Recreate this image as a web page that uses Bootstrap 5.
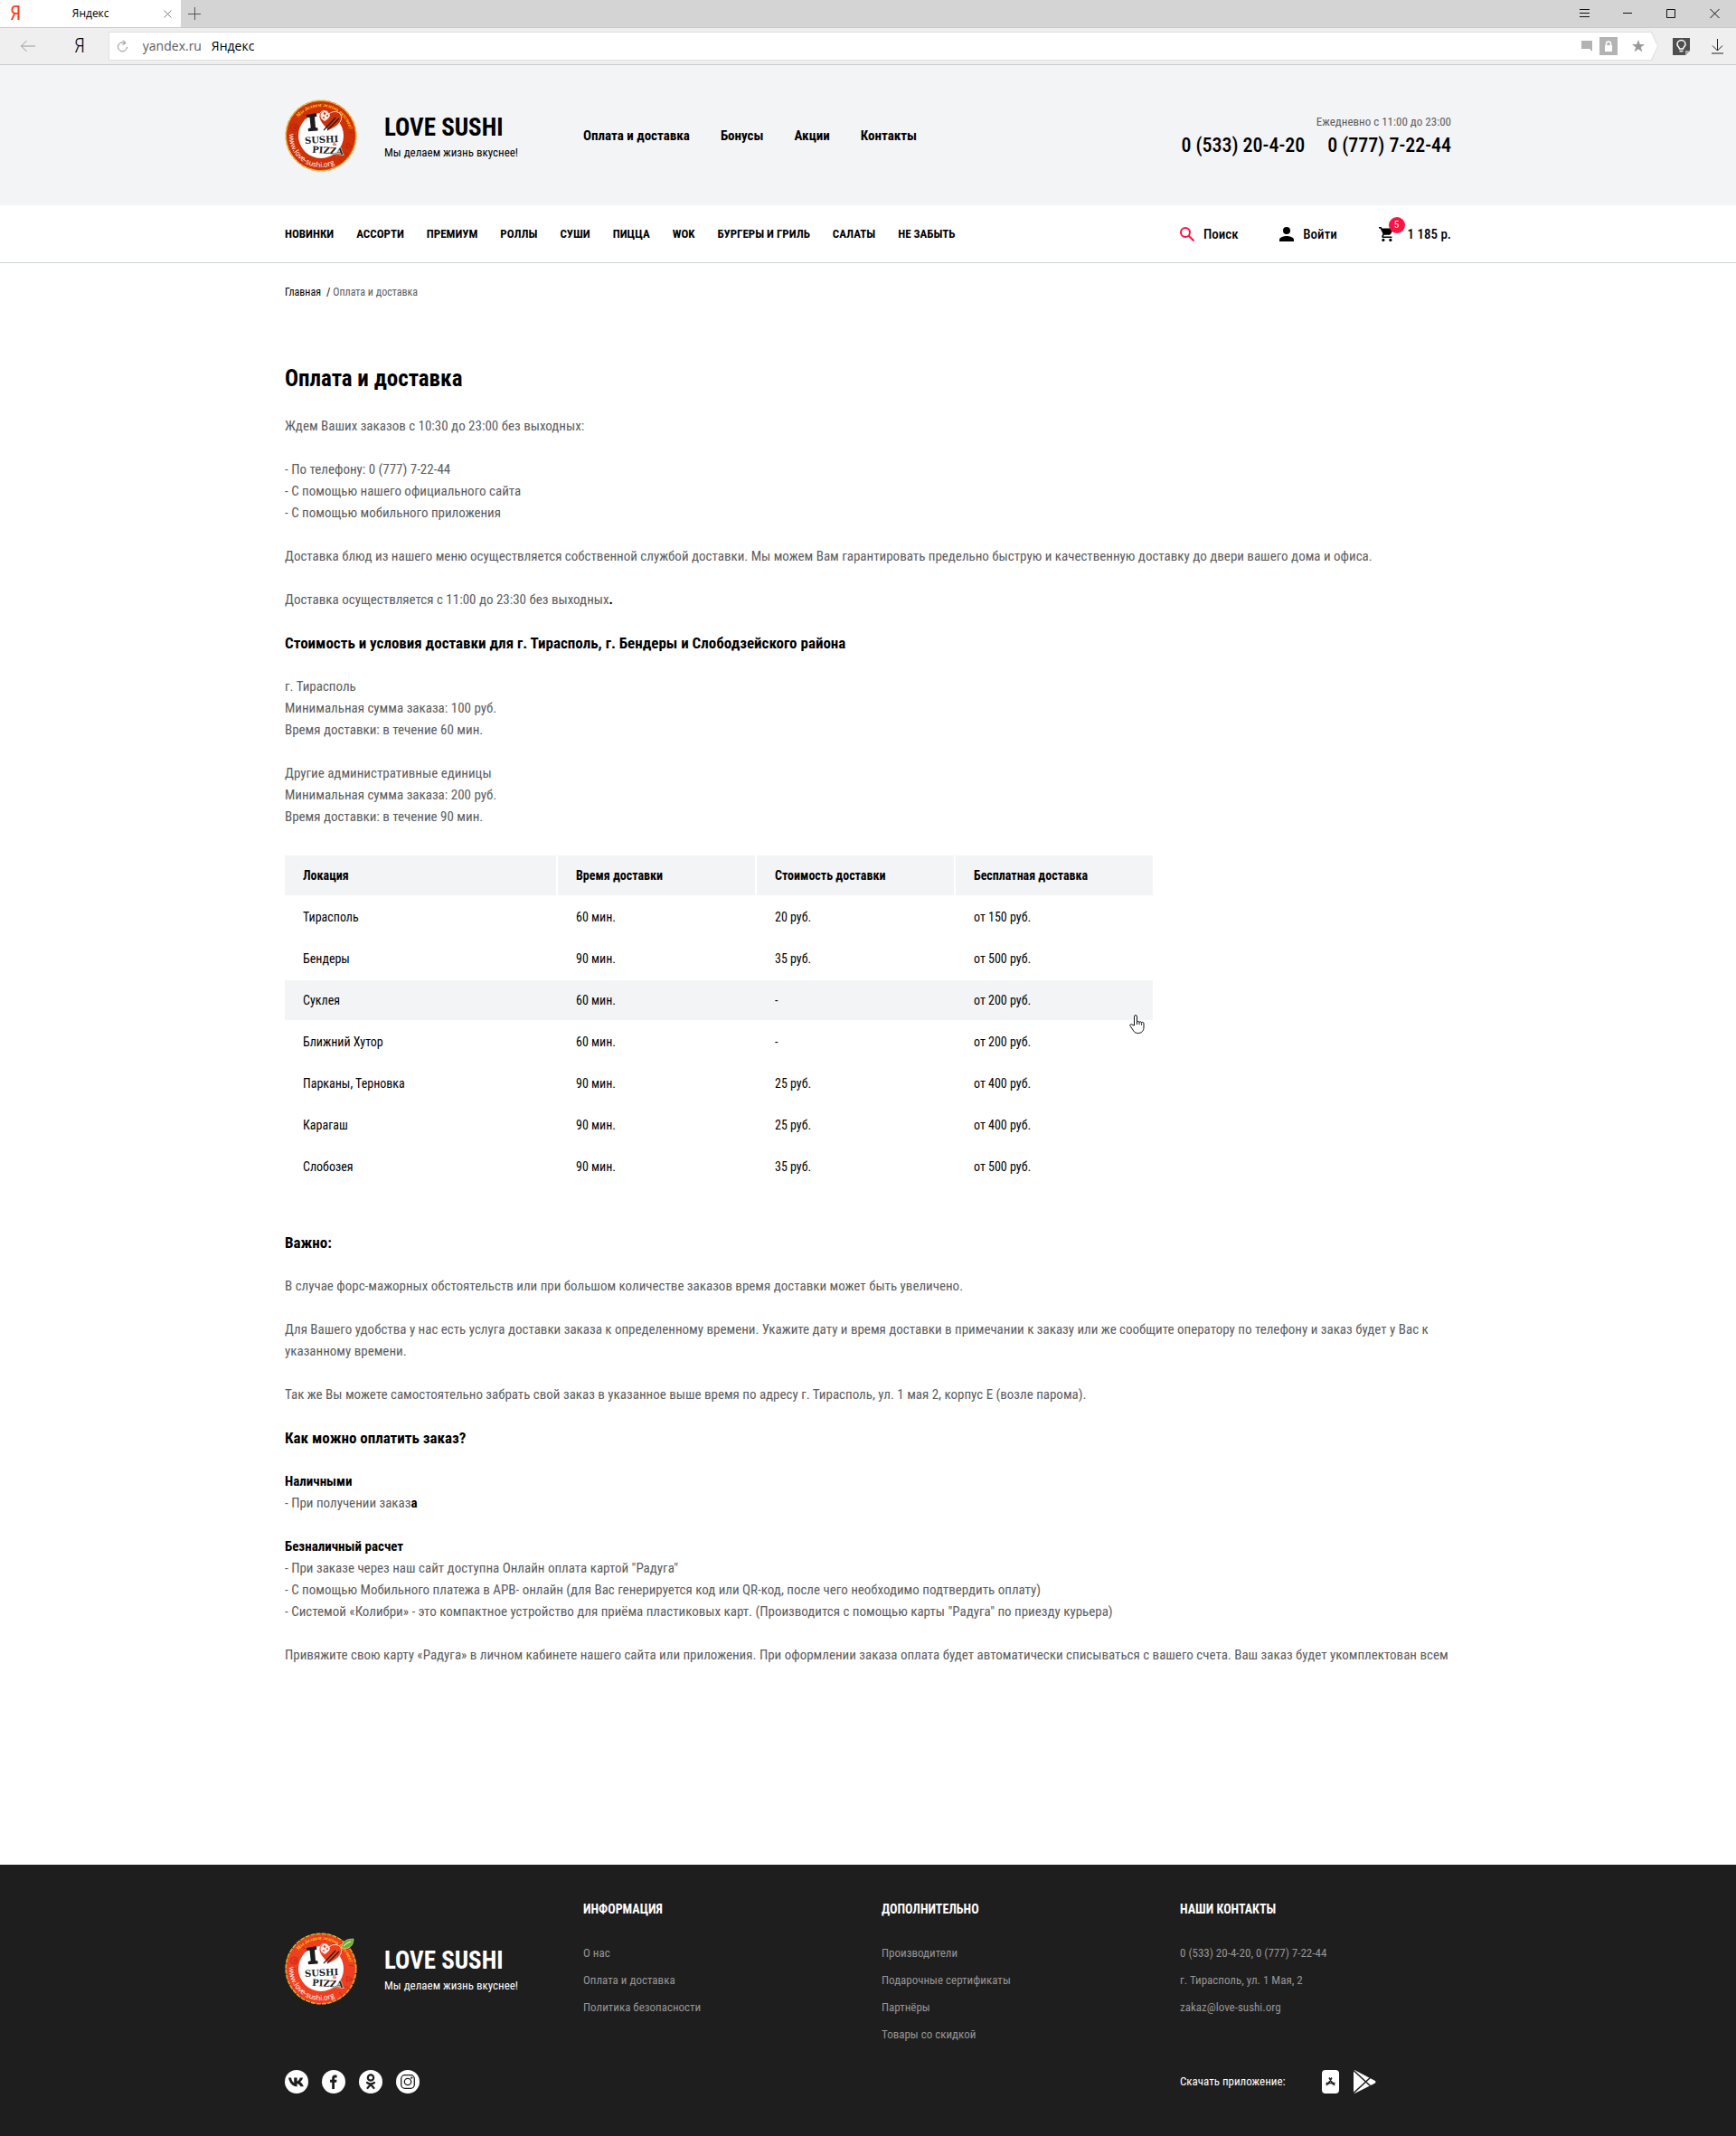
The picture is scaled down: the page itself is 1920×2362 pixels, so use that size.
<!DOCTYPE html>
<html lang="ru">
<head>
<meta charset="utf-8">
<meta name="viewport" content="width=device-width, initial-scale=1">
<title>Оплата и доставка — LOVE SUSHI</title>
<link href="https://cdn.jsdelivr.net/npm/bootstrap@5.3.0/dist/css/bootstrap.min.css" rel="stylesheet">
<style>
  :root { --ink: #000; --muted: #5b5c5d; --panel: #f3f4f6; --brand: #fb1342; }
  body { font-family: "Roboto Condensed", Roboto, sans-serif; font-size: 15px; line-height: 24px; color: var(--ink); background: #fff; }
  a { color: inherit; text-decoration: none; }
  svg { display: block; flex: none; }
  .site-wrap { --bs-gutter-x: 30px; }
  .site-wrap > .row { --bs-gutter-x: 30px; }

  /* browser frame */
  .chrome-ui { font-family: "Open Sans", sans-serif; font-size: 14px; }
  .chrome-ui button { border: 0; background: none; padding: 0; color: inherit; }
  .tab-strip { background: #d4d4d4; height: 31px; border-bottom: 1px solid #c9c9c9; }
  .tab-item { width: 200px; background: #fff; font-size: 12px; padding: 0 10px 0 11px; }
  .ya-mark { font-family: "Roboto Condensed", sans-serif; font-size: 22px; line-height: 30px; font-weight: 300; }
  .ya-red { color: #fc3f1d; font-weight: 400; }
  .ya-home { margin: 0 26px 0 42px; }
  .win-buttons { gap: 37px; padding-right: 18px; }
  .tool-strip { background: #efefef; height: 41px; border-bottom: 1px solid #c8cacc; padding: 0 14px 0 22px; }
  .address-edge { background: #e0e0e0; padding: 1px; height: 32px; clip-path: polygon(0 0, calc(100% - 7px) 0, 100% 50%, calc(100% - 7px) 100%, 0 100%); }
  .address-box { background: #fff; clip-path: polygon(0 0, calc(100% - 7px) 0, 100% 50%, calc(100% - 7px) 100%, 0 100%); padding: 0 14px 0 8px; }
  .address-box input { border: 0; outline: 0; padding: 0; width: 76px; color: #5c5c5c; background: none; }

  /* header */
  .site-head { background: var(--panel); height: 155px; }
  .brand-name { font-size: 27px; font-weight: 700; line-height: 36px; }
  .brand-tag { font-size: 13px; line-height: 20px; }
  .brand-link { gap: 30px; }
  .brand-words { padding-top: 2px; }
  .top-nav { gap: 34px; font-weight: 700; }
  .hours { font-size: 13px; line-height: 22px; color: var(--muted); }
  .phones { font-size: 22px; line-height: 30px; font-weight: 500; gap: 25px; }
  .cat-bar { height: 64px; border-bottom: 1px solid #cdd3d8; }
  .cat-nav { gap: 25px; font-size: 13px; font-weight: 700; text-transform: uppercase; }
  .user-nav a { gap: 10px; font-weight: 500; }
  .user-nav .cart-link { gap: 16px; }
  .cart-count { position: absolute; left: 11px; top: -11px; width: 18px; height: 18px; border-radius: 50%; background: var(--brand); color: #fff; font-size: 11px; line-height: 18px; font-weight: 400; text-align: center; }

  /* article */
  .crumbs { font-size: 12px; line-height: 20px; padding-top: 22px; gap: 6px; color: var(--muted); }
  .crumbs a { color: var(--ink); }
  .page-title { font-size: 25px; line-height: 32px; font-weight: 700; margin: 70px 0 24px; }
  .page-text { padding-bottom: 196px; color: var(--muted); }
  .page-text p, .page-text ul { margin: 0 0 24px; }
  .page-text b, .page-text h2, .page-text h3 { color: var(--ink); }
  .page-text h2 { font-size: 17px; line-height: 24px; font-weight: 700; margin: 0 0 24px; }
  .page-text h3 { font-size: 15px; line-height: 24px; font-weight: 700; margin: 0; }
  .rates { width: 960px; max-width: 100%; border-collapse: separate; border-spacing: 0 2px; table-layout: fixed; margin: 29px 0 48px; color: var(--ink); font-size: 14px; }
  .rates th, .rates td { height: 44px; padding: 0 20px; }
  .rates th { background: var(--panel); font-weight: 700; border-right: 2px solid #fff; }
  .rates th:last-child { border-right: 0; }
  .rates .is-hover td { background: var(--panel); }
  .col-place { width: 302px; }
  .col-mid { width: 220px; }
  .pointer { position: absolute; right: 9px; bottom: -15px; }

  /* footer */
  .site-foot { background: #1e1e1e; color: #fff; padding: 37px 0 47px; }
  .foot-brand { margin-top: 38px; }
  .foot-title { font-size: 14px; line-height: 24px; font-weight: 700; margin: 0 0 22px; text-transform: uppercase; }
  .foot-list { font-size: 13px; line-height: 30px; color: #969696; margin: 0; }
  .foot-bottom { margin-top: 24px; font-size: 13px; line-height: 26px; }
  .socials { gap: 15px; }
  .app-label { margin-right: 40px; }
</style>
</head>
<body>

<div class="chrome-ui">
  <div class="tab-strip d-flex justify-content-between">
    <div class="d-flex align-items-center">
      <div class="tab-item d-flex align-items-center justify-content-between h-100">
        <span class="ya-mark ya-red">Я</span><span class="me-1">Яндекс</span>
        <button type="button" aria-label="Закрыть вкладку"><svg width="9" height="9" stroke="#777"><path d="M.5.5l8 8M8.500.5l-8 8"/></svg></button>
      </div>
      <button type="button" class="ms-2" aria-label="Новая вкладка"><svg width="14" height="14" stroke="#555"><path d="M7.500 0v14M0 7.500h14"/></svg></button>
    </div>
    <div class="win-buttons d-flex align-items-center">
      <button type="button" aria-label="Меню"><svg width="11" height="10" stroke="#111"><path d="M0 .5h11M0 4.500h11M0 8.500h11"/></svg></button>
      <button type="button" aria-label="Свернуть"><svg width="11" height="10" stroke="#111"><path d="M0 4.500h10"/></svg></button>
      <button type="button" aria-label="Развернуть"><svg width="11" height="10" fill="none" stroke="#111"><path d="M.5.5h9v9h-9z"/></svg></button>
      <button type="button" aria-label="Закрыть"><svg width="11" height="10" stroke="#111"><path d="M.5 0l10 10M10.500 0l-10 10"/></svg></button>
    </div>
  </div>
  <div class="tool-strip d-flex align-items-center">
    <button type="button" aria-label="Назад"><svg width="18" height="14" fill="none" stroke="#999"><path d="M17 7H1.500M7.500 1l-6 6 6 6"/></svg></button>
    <span class="ya-mark ya-home">Я</span>
    <div class="address-edge flex-grow-1">
      <div class="address-box d-flex align-items-center h-100">
        <button type="button" class="me-3" aria-label="Обновить"><svg width="13" height="14" fill="none" stroke="#888"><path d="M11.500 8A5 5 0 1 1 9 3.500M7 .5l3 3-3.500 2"/></svg></button>
        <input type="text" value="yandex.ru" aria-label="Адрес"><span class="text-black flex-grow-1">Яндекс</span>
        <svg width="12" height="14" fill="#b3b3b3" class="me-2"><path d="M0 1h12v12l-3-3H0z"/></svg>
        <svg width="20" height="20" class="me-3"><path fill="#b3b3b3" d="M0 0h20v20H0z"/><path fill="#fff" d="M6 9h8v7H6z"/><path fill="none" stroke="#fff" stroke-width="1.500" d="M7.500 9V7.500a2.500 2.500 0 0 1 5 0V9"/></svg>
        <svg width="14" height="14" fill="#999"><path d="M7 0l1.800 5H14L9.800 8.200 11.400 13.500 7 10.300l-4.400 3.200L4.200 8.200 0 5h5.200z"/></svg>
      </div>
    </div>
    <button type="button" class="ms-3" aria-label="Подсказки"><svg width="19" height="19" fill="none"><path fill="#4f4f4f" d="M0 0h19v14l-5 5H0z"/><path fill="#aaa" d="M19 14l-5 5v-5z"/><path stroke="#fff" stroke-width="1.500" d="M7.500 12c0-2-2.500-2.500-2.500-5a4.300 4.300 0 0 1 9 0c0 2.500-2.500 3-2.500 5zM7.500 14.500h4"/></svg></button>
    <button type="button" class="ms-4" aria-label="Загрузки"><svg width="13" height="17" fill="none" stroke="#222"><path d="M6.500 0v13M1 7.500L6.500 13 12 7.500M0 16h13"/></svg></button>
  </div>
</div>

<header>
  <div class="site-head d-flex align-items-center">
    <div class="container-xxl site-wrap">
      <div class="row align-items-center">
        <div class="col-3">
          <a href="#" class="brand-link d-flex align-items-center">
            <svg width="80" height="80" viewBox="0 0 80 80" color="#cf3208" role="img" aria-label="Love Sushi">
              <g id="logo">
                <circle cx="40" cy="40" r="38.500" fill="currentColor"/>
                <circle cx="40" cy="40" r="38.800" fill="none" stroke="#e8a82c" stroke-width="1.600" stroke-dasharray="5.200 .9"/>
                <g fill="none" stroke="#a81414" opacity=".55">
                  <circle cx="10.500" cy="31" r="4"/><circle cx="11" cy="31" r="1.500"/><path d="M6 40h6M18 13l4 5M24 8l4 4M35 4l2 6M46 4l-2 6M56 8l-3 5M69 48l6 4-7 2zM66 59l5 3M60 66l4 4M13 58l-4 3M20 66l-4 4M71 36l5 1"/>
                </g>
                <circle cx="40" cy="40" r="25" fill="#fff"/>
                <path id="arcTop" d="M15 20A32 32 0 0 1 72 42" fill="none"/>
                <path id="arcLow" d="M5 38A35 35 0 0 0 68 61" fill="none"/>
                <text font-family="Liberation Serif, serif" font-style="italic" font-weight="700" font-size="6" fill="#ffc20e"><textPath href="#arcTop">Мы делаем жизнь вкуснее!</textPath></text>
                <text font-family="Open Sans, sans-serif" font-size="8" fill="#fff"><textPath href="#arcLow">www.love-sushi.org</textPath></text>
                <path d="M24 17l11-2 .5 3.500-2.500 1 1 11.500 2.500.5v3l-10.500.8-.3-3 3-1-1.200-11.500-3 .2z" fill="#1d1d1f"/>
                <path d="M48 34C40 26 36 20 39 15c3-4 8-3 10 1 4-4 11-3 13 1 3 7-5 14-14 17z" fill="currentColor" stroke="#fff" stroke-width=".8"/>
                <path d="M40 21c-2-6 2-9 6-8l4 4c0 3-3 5-6 7z" fill="#fff" opacity=".9"/>
                <g fill="currentColor"><circle cx="44" cy="15.500" r="1.300"/><circle cx="47" cy="18" r="1"/><circle cx="43" cy="20" r="1"/></g>
                <path d="M43 34l13-14M47 34l13-13" stroke="#1d1d1f" stroke-width="1.200"/>
                <g font-family="DejaVu Serif, serif" font-weight="700" fill="#1d1d1f">
                  <text x="22" y="48" font-size="10" transform="rotate(-3 40 45)">SUSHI</text>
                  <text x="30" y="60" font-size="10" stroke="#fff" stroke-width="1" paint-order="stroke" transform="rotate(4 48 59)">PIZZA</text>
                </g>
                <text x="53" y="51" font-family="DejaVu Serif, serif" font-weight="700" font-size="5" fill="currentColor">&amp;</text>
              </g>
            </svg>
            <span class="brand-words text-nowrap"><span class="brand-name d-block">LOVE SUSHI</span><span class="brand-tag d-block">Мы делаем жизнь вкуснее!</span></span>
          </a>
        </div>
        <nav class="col-5 top-nav d-flex text-nowrap">
          <a href="#">Оплата и доставка</a><a href="#">Бонусы</a><a href="#">Акции</a><a href="#">Контакты</a>
        </nav>
        <div class="col-4">
          <div class="hours text-end">Ежедневно с 11:00 до 23:00</div>
          <div class="phones d-flex justify-content-end text-nowrap"><a href="tel:053320420">0 (533) 20-4-20</a><a href="tel:077772244">0 (777) 7-22-44</a></div>
        </div>
      </div>
    </div>
  </div>
  <div class="cat-bar d-flex align-items-center">
    <div class="container-xxl site-wrap">
      <div class="row align-items-center">
        <nav class="col-9 cat-nav d-flex text-nowrap">
          <a href="#">Новинки</a><a href="#">Ассорти</a><a href="#">Премиум</a><a href="#">Роллы</a><a href="#">Суши</a><a href="#">Пицца</a><a href="#">Wok</a><a href="#">Бургеры и гриль</a><a href="#">Салаты</a><a href="#">Не забыть</a>
        </nav>
        <div class="col-3 user-nav d-flex justify-content-between text-nowrap">
          <a href="#" class="d-flex align-items-center"><svg width="16" height="16" fill="none" stroke="#fb1342" stroke-width="2"><circle cx="6" cy="6" r="5"/><path d="M9.500 9.500l6 6"/></svg>Поиск</a>
          <a href="#" class="d-flex align-items-center"><svg width="16" height="16"><circle cx="8" cy="4" r="4"/><path d="M0 16v-2c0-2.700 5.300-4 8-4s8 1.300 8 4v2z"/></svg>Войти</a>
          <a href="#" class="cart-link d-flex align-items-center"><span class="position-relative"><svg width="16" height="16"><path d="M0 0h2.600l.8 1.600h11.800c.6 0 1 .6.7 1.200l-2.900 5.200c-.3.500-.8.800-1.400.8H5.700L5 10.200c-.1.200 0 .2.200.2h9.300V12H4.900c-1.200 0-2-1.300-1.400-2.400l1-2L1.600 1.600H0z"/><circle cx="4.900" cy="14.400" r="1.600"/><circle cx="12.900" cy="14.400" r="1.600"/></svg><span class="cart-count">5</span></span>1 185 р.</a>
        </div>
      </div>
    </div>
  </div>
</header>

<main class="container-xxl site-wrap">
  <nav class="crumbs d-flex" aria-label="Навигация"><a href="#">Главная</a><span><span class="text-black">/</span> Оплата и доставка</span></nav>
  <h1 class="page-title">Оплата и доставка</h1>
  <div class="page-text">
    <p>Ждем Ваших заказов с 10:30 до 23:00 без выходных:</p>
    <ul class="list-unstyled">
      <li>- По телефону: 0 (777) 7-22-44</li>
      <li>- С помощью нашего официального сайта</li>
      <li>- С помощью мобильного приложения</li>
    </ul>
    <p>Доставка блюд из нашего меню осуществляется собственной службой доставки. Мы можем Вам гарантировать предельно быструю и качественную доставку до двери вашего дома и офиса.</p>
    <p>Доставка осуществляется с 11:00 до 23:30 без выходных<b>.</b></p>
    <h2>Стоимость и условия доставки для г. Тирасполь, г. Бендеры и Слободзейского района</h2>
    <p>г. Тирасполь<br>Минимальная сумма заказа: 100 руб.<br>Время доставки: в течение 60 мин.</p>
    <p>Другие административные единицы<br>Минимальная сумма заказа: 200 руб.<br>Время доставки: в течение 90 мин.</p>

    <table class="rates">
      <colgroup><col class="col-place"><col class="col-mid"><col class="col-mid"><col></colgroup>
      <thead><tr><th scope="col">Локация</th><th scope="col">Время доставки</th><th scope="col">Стоимость доставки</th><th scope="col">Бесплатная доставка</th></tr></thead>
      <tbody>
        <tr><td>Тирасполь</td><td>60 мин.</td><td>20 руб.</td><td>от 150 руб.</td></tr>
        <tr><td>Бендеры</td><td>90 мин.</td><td>35 руб.</td><td>от 500 руб.</td></tr>
        <tr class="is-hover"><td>Суклея</td><td>60 мин.</td><td>-</td><td class="position-relative">от 200 руб.
          <svg class="pointer" width="17" height="21" viewBox="0 0 17 21" fill="#fff" stroke="#111" stroke-linejoin="round"><path d="M5.500 12V2.200a1.500 1.500 0 0 1 3 0V8.500c0-1.500 2.500-1.500 2.500.2 0-1.500 2.500-1.200 2.500.4 0-1.300 2.500-1.100 2.500.8V14c0 4-2.500 6.500-6.500 6.500-3 0-4.500-1.500-6-4.500L1 12.500c-.8-1.500 1-2.500 2-1.500z"/><path d="M8.500 8v3M11 9v2M13.500 9.500v2"/></svg></td></tr>
        <tr><td>Ближний Хутор</td><td>60 мин.</td><td>-</td><td>от 200 руб.</td></tr>
        <tr><td>Парканы, Терновка</td><td>90 мин.</td><td>25 руб.</td><td>от 400 руб.</td></tr>
        <tr><td>Карагаш</td><td>90 мин.</td><td>25 руб.</td><td>от 400 руб.</td></tr>
        <tr><td>Слобозея</td><td>90 мин.</td><td>35 руб.</td><td>от 500 руб.</td></tr>
      </tbody>
    </table>

    <h2>Важно:</h2>
    <p>В случае форс-мажорных обстоятельств или при большом количестве заказов время доставки может быть увеличено.</p>
    <p>Для Вашего удобства у нас есть услуга доставки заказа к определенному времени. Укажите дату и время доставки в примечании к заказу или же сообщите оператору по телефону и заказ будет у Вас к указанному времени.</p>
    <p>Так же Вы можете самостоятельно забрать свой заказ в указанное выше время по адресу г. Тирасполь, ул. 1 мая 2, корпус Е (возле парома).</p>
    <h2>Как можно оплатить заказ?</h2>
    <h3>Наличными</h3>
    <p>- При получении заказ<b>а</b></p>
    <h3>Безналичный расчет</h3>
    <ul class="list-unstyled">
      <li>- При заказе через наш сайт доступна Онлайн оплата картой "Радуга"</li>
      <li>- С помощью Мобильного платежа в АРВ- онлайн (для Вас генерируется код или QR-код, после чего необходимо подтвердить оплату)</li>
      <li>- Системой «Колибри» - это компактное устройство для приёма пластиковых карт. (Производится с помощью карты "Радуга" по приезду курьера)</li>
    </ul>
    <p>Привяжите свою карту «Радуга» в личном кабинете нашего сайта или приложения. При оформлении заказа оплата будет автоматически списываться с вашего счета. Ваш заказ будет укомплектован всем</p>
  </div>
</main>

<footer class="site-foot">
  <div class="container-xxl site-wrap">
    <div class="row">
      <div class="col-3">
        <a href="#" class="brand-link foot-brand d-flex align-items-center">
          <svg width="80" height="80" viewBox="0 0 80 80" color="#ee3f20" role="img" aria-label="Love Sushi"><use href="#logo"/><path d="M63 17c0-7 5-10 13-10 0 7-4 12-13 10z" fill="#6fae2e" stroke="#d6ecb0" stroke-width=".6"/><path d="M65 15c3-3 5-4 8-5" stroke="#fff" fill="none"/></svg>
          <span class="brand-words text-nowrap"><span class="brand-name d-block">LOVE SUSHI</span><span class="brand-tag d-block">Мы делаем жизнь вкуснее!</span></span>
        </a>
      </div>
      <div class="col-3">
        <h2 class="foot-title">Информация</h2>
        <ul class="foot-list list-unstyled"><li><a href="#">О нас</a></li><li><a href="#">Оплата и доставка</a></li><li><a href="#">Политика безопасности</a></li></ul>
      </div>
      <div class="col-3">
        <h2 class="foot-title">Дополнительно</h2>
        <ul class="foot-list list-unstyled"><li><a href="#">Производители</a></li><li><a href="#">Подарочные сертификаты</a></li><li><a href="#">Партнёры</a></li><li><a href="#">Товары со скидкой</a></li></ul>
      </div>
      <div class="col-3">
        <h2 class="foot-title">Наши контакты</h2>
        <ul class="foot-list list-unstyled"><li>0 (533) 20-4-20, 0 (777) 7-22-44</li><li>г. Тирасполь, ул. 1 Мая, 2</li><li><a href="#">zakaz@love-sushi.org</a></li></ul>
      </div>
    </div>
    <div class="row foot-bottom">
      <div class="col-9 socials d-flex">
        <a href="#" aria-label="ВКонтакте"><svg width="26" height="26" viewBox="0 0 26 26"><circle cx="13" cy="13" r="13" fill="#fff"/><path fill="#1e1e1e" d="M12.600 18.200c-4.500 0-7.500-4.200-8.600-9.600h3c.5 3 1.800 4.900 3.200 5.600V8.600h3.400v4c1.300-.3 2.500-1.800 3.200-4h3.200c-.4 2-1.600 3.800-3 4.700 1.600.9 2.800 2.600 3.800 4.900h-3.400c-.8-1.700-2-3-3.800-3.300v3.300z"/></svg></a>
        <a href="#" aria-label="Facebook"><svg width="26" height="26" viewBox="0 0 26 26"><circle cx="13" cy="13" r="13" fill="#fff"/><path fill="#1e1e1e" d="M11.200 21v-7.200H9v-3h2.200V9c0-2.200 1.300-3.400 3.400-3.400.8 0 1.500 0 2 .1v2.700h-1.400c-1 0-1.200.5-1.200 1.200v1.200h2.500l-.4 3h-2.100V21z"/></svg></a>
        <a href="#" aria-label="Одноклассники"><svg width="26" height="26" viewBox="0 0 26 26" fill="none" stroke="#1e1e1e" stroke-width="2.200" stroke-linecap="round"><circle cx="13" cy="13" r="13" fill="#fff" stroke="none"/><circle cx="13" cy="8.500" r="3.200"/><path d="M9 14c2.500 1.800 5.500 1.800 8 0M13 16l-3.500 4M13 16l3.500 4"/></svg></a>
        <a href="#" aria-label="Instagram"><svg width="26" height="26" viewBox="0 0 26 26" fill="none" stroke="#1e1e1e" stroke-width="1.300"><circle cx="13" cy="13" r="13" fill="#fff" stroke="none"/><rect x="5.700" y="5.700" width="14.600" height="14.600" rx="4"/><circle cx="13" cy="13" r="3.700"/><circle cx="17.300" cy="8.700" r=".5"/></svg></a>
      </div>
      <div class="col-3 d-flex">
        <span class="app-label text-nowrap">Скачать приложение:</span>
        <a href="#" class="me-3" aria-label="App Store"><svg width="19" height="26" viewBox="0 0 19 26"><rect width="19" height="26" rx="4" fill="#fff"/><path d="M8 8.500l4.500 7.500M11 8.500L6.500 16M4.500 14.500h10M5 17l1-1.500M14 17l-1-1.500" stroke="#1e1e1e" stroke-width="1.500" fill="none"/></svg></a>
        <a href="#" aria-label="Google Play"><svg width="26" height="26" viewBox="0 0 26 26"><path fill="#fff" d="M0 1.500C0 .3 1 0 2 .5l21 11c2 1 2 2.500 0 3.500l-21 10.500c-1 .5-2 .2-2-1z"/><path stroke="#1e1e1e" stroke-width="1.500" d="M0 .5L19 18M0 25.500L19 8"/></svg></a>
      </div>
    </div>
  </div>
</footer>
<script src="https://cdn.jsdelivr.net/npm/bootstrap@5.3.0/dist/js/bootstrap.bundle.min.js"></script>
</body>
</html>
